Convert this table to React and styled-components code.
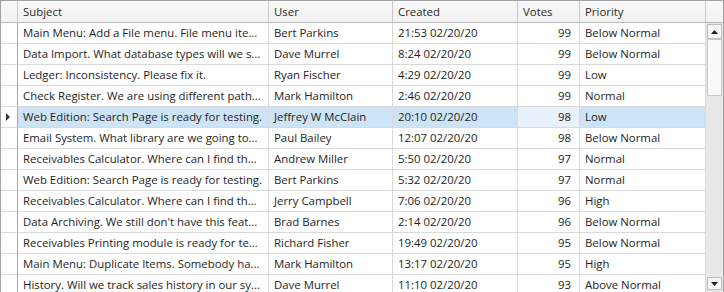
import React from "react"
import styled, { createGlobalStyle, css } from "styled-components"

const GlobalStyle = createGlobalStyle`
  html, body {
    margin: 0;
    padding: 0;
    overflow: hidden;
    background: #ffffff;
  }
  body {
    font-family: "Open Sans", "Noto Sans", sans-serif;
    font-size: 11.4px;
    color: #1e1e1e;
  }
`

const columns = [
  { key: "subject", title: "Subject", width: 251 },
  { key: "user", title: "User", width: 124 },
  { key: "created", title: "Created", width: 125 },
  { key: "votes", title: "Votes", width: 62, align: "right" },
  { key: "priority", title: "Priority", width: 126 },
]

const rows = [
  ["Main Menu: Add a File menu. File menu ite...", "Bert Parkins", "21:53 02/20/20", 99, "Below Normal"],
  ["Data Import. What database types will we s...", "Dave Murrel", "8:24 02/20/20", 99, "Below Normal"],
  ["Ledger: Inconsistency. Please fix it.", "Ryan Fischer", "4:29 02/20/20", 99, "Low"],
  ["Check Register. We are using different path...", "Mark Hamilton", "2:46 02/20/20", 99, "Normal"],
  ["Web Edition: Search Page is ready for testing.", "Jeffrey W McClain", "20:10 02/20/20", 98, "Low"],
  ["Email System. What library are we going to...", "Paul Bailey", "12:07 02/20/20", 98, "Below Normal"],
  ["Receivables Calculator. Where can I find the...", "Andrew Miller", "5:50 02/20/20", 97, "Normal"],
  ["Web Edition: Search Page is ready for testing.", "Bert Parkins", "5:32 02/20/20", 97, "Normal"],
  ["Receivables Calculator. Where can I find the...", "Jerry Campbell", "7:06 02/20/20", 96, "High"],
  ["Data Archiving. We still don't have this feat...", "Brad Barnes", "2:14 02/20/20", 96, "Below Normal"],
  ["Receivables Printing module is ready for tes...", "Richard Fisher", "19:49 02/20/20", 95, "Below Normal"],
  ["Main Menu: Duplicate Items. Somebody ha...", "Mark Hamilton", "13:17 02/20/20", 95, "High"],
  ["History. Will we track sales history in our sy...", "Dave Murrel", "11:10 02/20/20", 93, "Above Normal"],
]

const selectedRow = 4
const focusedCol = 3

const Frame = styled.div`
  width: 724px;
  height: 293px;
  box-sizing: border-box;
  border: 1px solid #a3a3a3;
  display: flex;
  flex-direction: column;
  overflow: hidden;
`

const HeaderRow = styled.div`
  display: flex;
  height: 22px;
  flex: none;
  background: linear-gradient(#f8f8f8, #f1f1f1);
`

const HeaderCell = styled.div`
  box-sizing: border-box;
  width: ${(p) => p.$width}px;
  flex: none;
  border-right: 1px solid #c9c9c9;
  border-bottom: 1px solid #b9b9b9;
  padding: 0 5px;
  line-height: 21px;
  color: #2b2b2b;
  white-space: nowrap;
  overflow: hidden;
  &:last-child {
    border-right: none;
  }
`

const Body = styled.div`
  display: flex;
  flex: 1;
  min-height: 0;
`

const RowList = styled.div`
  flex: 1;
  overflow: hidden;
`

const Row = styled.div`
  display: flex;
  height: 21px;
  ${(p) =>
    p.$selected &&
    css`
      background: #cde4f7;
    `}
`

const RowHeader = styled.div`
  box-sizing: border-box;
  width: 17px;
  flex: none;
  border-right: 1px solid #a9a9a9;
  border-bottom: 1px solid #dadada;
  display: flex;
  align-items: center;
  padding-left: 5px;
  background: #ffffff;
`

const Indicator = styled.span`
  width: 0;
  height: 0;
  border-top: 4px solid transparent;
  border-bottom: 4px solid transparent;
  border-left: 4px solid #3a3a3a;
`

const Cell = styled.div`
  box-sizing: border-box;
  width: ${(p) => p.$width}px;
  flex: none;
  border-right: 1px solid #dadada;
  border-bottom: 1px solid #dadada;
  padding: 0 ${(p) => (p.$align === "right" ? "8px" : "5px")} 0 5px;
  line-height: 20px;
  text-align: ${(p) => p.$align || "left"};
  white-space: nowrap;
  overflow: hidden;
  text-overflow: ellipsis;
  ${(p) =>
    p.$focused &&
    css`
      background: #e9f2fb;
    `}
`

const ScrollBar = styled.div`
  width: 17px;
  flex: none;
  background: #e8e8e8;
  display: flex;
  flex-direction: column;
  align-items: flex-start;
  padding: 1px 0 2px 1px;
  box-sizing: border-box;
`

const ScrollButton = styled.div`
  box-sizing: border-box;
  width: 15px;
  height: ${(p) => p.$height || 15}px;
  border: 1px solid #bcbcbc;
  background: #f7f7f7;
  display: flex;
  align-items: center;
  justify-content: center;
`

const Thumb = styled.div`
  box-sizing: border-box;
  width: 15px;
  height: 57px;
  border: 1px solid #c8c8c8;
  background: #f9f9f9;
`

const Spacer = styled.div`
  flex: 1;
`

const Arrow = ({ down }) => (
  <svg width="7" height="4" viewBox="0 0 7 4">
    <path d={down ? "M0 0 H7 L3.5 4 Z" : "M0 4 H7 L3.5 0 Z"} fill="#1e1e1e" />
  </svg>
)

export default function App() {
  return (
    <>
      <GlobalStyle />
      <Frame>
        <HeaderRow>
          <HeaderCell $width={17} />
          {columns.map((c) => (
            <HeaderCell key={c.key} $width={c.width}>
              {c.title}
            </HeaderCell>
          ))}
          <HeaderCell $width={17} />
        </HeaderRow>
        <Body>
          <RowList>
            {rows.map((r, i) => (
              <Row key={i} $selected={i === selectedRow}>
                <RowHeader>{i === selectedRow && <Indicator />}</RowHeader>
                {columns.map((c, j) => (
                  <Cell
                    key={c.key}
                    $width={c.width}
                    $align={c.align}
                    $focused={i === selectedRow && j === focusedCol}
                  >
                    {r[j]}
                  </Cell>
                ))}
              </Row>
            ))}
          </RowList>
          <ScrollBar>
            <ScrollButton>
              <Arrow />
            </ScrollButton>
            <Thumb />
            <Spacer />
            <ScrollButton $height={13}>
              <Arrow down />
            </ScrollButton>
          </ScrollBar>
        </Body>
      </Frame>
    </>
  )
}
